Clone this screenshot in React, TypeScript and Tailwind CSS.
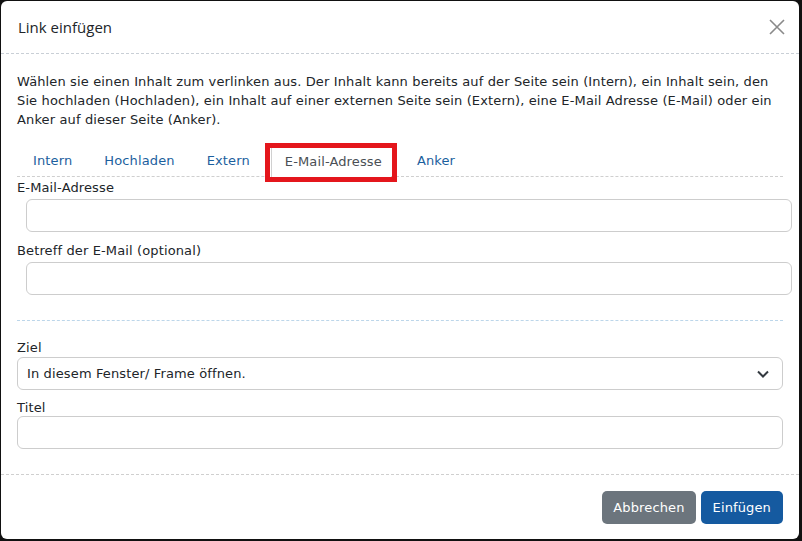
import React from "react";

const body = { fontFamily: '"DejaVu Sans", Verdana, sans-serif' };
const head = { fontFamily: '"Open Sans", "Noto Sans", sans-serif' };

function Label({ children }: { children: React.ReactNode }) {
  return <div className="text-[13px] leading-[19px] text-[#212529]">{children}</div>;
}

export default function App() {
  const tabs = ["Intern", "Hochladen", "Extern"];
  return (
    <div className="w-[802px] h-[541px] bg-[#111] pl-px pt-px overflow-hidden tracking-[0.13px]" style={body}>
      <div className="w-[798px] h-[538px] bg-white rounded-[6px] flex flex-col">
        {/* header */}
        <div className="h-[53px] shrink-0 flex items-center justify-between pl-[17px] pr-[14px] border-b border-dashed border-[#c9cfd6]">
          <div className="text-[15px] text-[#212529] pt-[1px] tracking-normal" style={head}>
            Link einfügen
          </div>
          <svg width="16" height="16" viewBox="0 0 16 16" className="mb-[1px]">
            <path d="M1 1 L15 15 M15 1 L1 15" stroke="#8a8a8a" strokeWidth="1.6" fill="none" />
          </svg>
        </div>

        {/* body */}
        <div className="flex-1 px-4 pt-[18px]">
          <p className="text-[13px] leading-[19px] text-[#212529]">
            Wählen sie einen Inhalt zum verlinken aus. Der Inhalt kann bereits auf der Seite sein (Intern), ein Inhalt sein, den
            Sie hochladen (Hochladen), ein Inhalt auf einer externen Seite sein (Extern), eine E-Mail Adresse (E-Mail) oder ein
            Anker auf dieser Seite (Anker).
          </p>

          {/* tabs */}
          <div className="mt-[17px] h-[31px] flex items-end border-b border-dashed border-[#cfcfcf]">
            {tabs.map((t) => (
              <div key={t} className="h-[30px] flex items-center px-4 text-[13px] text-[#1c5f9e]">
                {t}
              </div>
            ))}
            <div className="relative h-[30px] ml-[5px] mr-[10px]">
              <div className="h-[31px] flex items-center pl-[13px] pr-[9px] text-[13px] text-[#4a4f55] bg-white border-l border-[#d0d0d0]">
                E-Mail-Adresse
              </div>
              <div className="absolute left-[-6px] right-[-6px] top-[-3px] bottom-[-6px] border-[5px] border-[#e4161c] pointer-events-none" />
            </div>
            <div className="h-[30px] flex items-center px-4 text-[13px] text-[#1c5f9e]">Anker</div>
          </div>

          {/* e-mail fields */}
          <div className="mt-[1px]">
            <Label>E-Mail-Adresse</Label>
            <div className="ml-[9px] w-[766px] h-[33px] mt-[2px] rounded-[6px] border border-[#cdcdcd]" />
          </div>
          <div className="mt-[9px]">
            <Label>Betreff der E-Mail (optional)</Label>
            <div className="ml-[9px] w-[766px] h-[33px] mt-[2px] rounded-[6px] border border-[#cdcdcd]" />
          </div>

          <div className="mt-[25px] border-t border-dashed border-[#bcd6ea]" />

          <div className="mt-[17px]">
            <Label>Ziel</Label>
            <div className="h-[33px] rounded-[6px] border border-[#cdcdcd] flex items-center justify-between pl-[9px] pr-[13px]">
              <span className="text-[13px] text-[#212529]">In diesem Fenster/ Frame öffnen.</span>
              <svg width="12" height="8" viewBox="0 0 12 8">
                <path d="M1 1.5 L6 6.5 L11 1.5" stroke="#343a40" strokeWidth="2" fill="none" />
              </svg>
            </div>
          </div>
          <div className="mt-[8px]">
            <Label>Titel</Label>
            <div className="h-[33px] -mt-px rounded-[6px] border border-[#cdcdcd]" />
          </div>
        </div>

        {/* footer */}
        <div className="h-[65px] shrink-0 border-t border-dashed border-[#cfcfcf] flex items-start justify-end gap-[5px] pr-4 pt-[16px]">
          <button className="h-[33px] px-[11px] rounded-[5px] bg-[#6c757d] text-white text-[13px]">Abbrechen</button>
          <button className="h-[33px] px-[12px] rounded-[5px] bg-[#155aa0] text-white text-[13px]">Einfügen</button>
        </div>
      </div>
    </div>
  );
}
